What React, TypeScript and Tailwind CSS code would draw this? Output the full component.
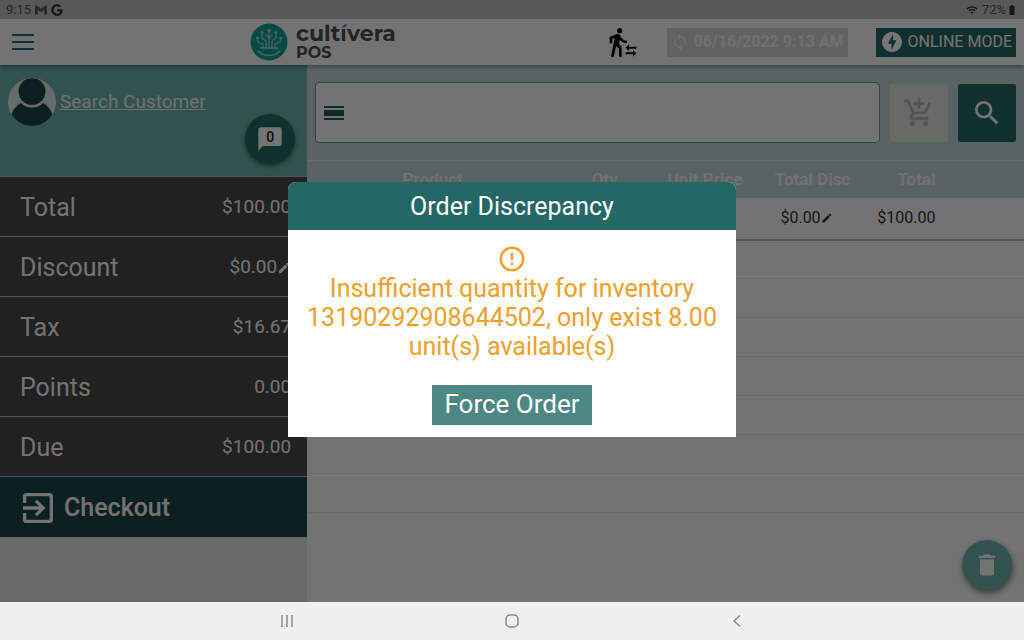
import {
  MdAddShoppingCart,
  MdBatteryFull,
  MdChatBubble,
  MdDelete,
  MdEdit,
  MdErrorOutline,
  MdExitToApp,
  MdOfflineBolt,
  MdSearch,
  MdSync,
  MdTransferWithinAStation,
  MdWifi,
} from "react-icons/md";
import { FaGoogle } from "react-icons/fa";
import { SiGmail } from "react-icons/si";

interface SummaryRow {
  label: string;
  value: string;
  editable?: boolean;
}

const SUMMARY: SummaryRow[] = [
  { label: "Total", value: "$100.00" },
  { label: "Discount", value: "$0.00", editable: true },
  { label: "Tax", value: "$16.67" },
  { label: "Points", value: "0.00" },
  { label: "Due", value: "$100.00" },
];

const EMPTY_ROWS = 7;

function MenuIcon() {
  return (
    <svg viewBox="0 0 22 16" className="h-4 w-[22px]" fill="#276b66">
      <rect y="0" width="22" height="2" />
      <rect y="7" width="22" height="2" />
      <rect y="14" width="22" height="2" />
    </svg>
  );
}

function BarsIcon() {
  return (
    <svg viewBox="0 0 20 14" className="h-[14px] w-5 shrink-0" fill="#1f5e59">
      <rect y="0" width="20" height="2" />
      <rect y="4" width="20" height="6" />
      <rect y="12" width="20" height="2" />
    </svg>
  );
}

function LogoMark() {
  return (
    <svg viewBox="0 0 38 38" className="size-[38px]">
      <circle cx="19" cy="19" r="18.5" fill="#0aa296" />
      <g fill="none" stroke="#9fd8d1" strokeWidth="1.3" strokeLinecap="round">
        <path d="M19 25V8" />
        <path d="M16 25v-7l-4-3V9" />
        <path d="M22 25v-7l4-3V9" />
        <path d="M13 25v-4l-5-2-1-4" />
        <path d="M25 25v-4l5-2 1-4" />
        <path d="M16 12l3 3 3-3" />
        <path d="M10 25h18" />
        <path d="M8 28c6 6 16 6 22 0" strokeWidth="1.6" />
      </g>
      <g fill="#9fd8d1">
        <circle cx="19" cy="7.5" r="1.7" />
        <circle cx="12" cy="9.5" r="1.5" />
        <circle cx="26" cy="9.5" r="1.5" />
        <circle cx="7.5" cy="15" r="1.5" />
        <circle cx="30.5" cy="15" r="1.5" />
      </g>
    </svg>
  );
}

function Avatar() {
  return (
    <svg viewBox="0 0 48 48" className="size-12 shrink-0">
      <defs>
        <clipPath id="avatar-clip">
          <circle cx="24" cy="24" r="24" />
        </clipPath>
      </defs>
      <g clipPath="url(#avatar-clip)">
        <rect width="48" height="48" fill="#e0eae4" />
        <path d="M3 38c2-7 6-11 10-13 5 6 17 6 22 0 4 2 8 6 10 13L36 48H12z" fill="#1c4750" />
        <circle cx="24" cy="13.5" r="13.5" fill="#1c4750" />
      </g>
    </svg>
  );
}

function StatusBar() {
  return (
    <div className="flex h-[19px] items-center justify-between bg-[#c0c0c0] px-[6px] text-[13px] text-[#555]">
      <div className="flex items-center gap-1">
        <span>9:15</span>
        <SiGmail className="size-3" />
        <FaGoogle className="size-3 text-[#333]" />
      </div>
      <div className="flex items-center">
        <MdWifi className="mr-1 size-3 text-[#333]" />
        <span>72%</span>
        <MdBatteryFull className="size-3 text-[#333]" />
      </div>
    </div>
  );
}

function Header() {
  return (
    <header className="relative z-10 flex h-[46px] items-center bg-[#fbfbfb] pr-2 pl-3 shadow-[0_2px_4px_rgba(0,0,0,0.35)]">
      <button type="button" aria-label="Menu">
        <MenuIcon />
      </button>
      <div className="ml-[216px] flex items-center gap-2 font-['Montserrat','Inter',sans-serif] font-bold text-[#4a4f52]">
        <LogoMark />
        <div>
          <div className="text-[22px] leading-[22px]">
            cult
            <span className="bg-linear-to-b from-[#0aa296] from-35% to-[#4a4f52] to-35% bg-clip-text text-transparent">
              í
            </span>
            vera
          </div>
          <div className="text-base leading-4">POS</div>
        </div>
      </div>
      <div className="ml-auto flex items-center gap-7">
        <button type="button" aria-label="Transfer" className="text-black">
          <MdTransferWithinAStation className="size-8" />
        </button>
        <button
          type="button"
          className="flex h-[29px] items-center gap-1 bg-[#d6d6d6] px-1 text-base font-bold text-[#f0f0f0]"
        >
          <MdSync className="size-[18px]" />
          06/16/2022 9:13 AM
        </button>
        <button
          type="button"
          className="flex h-[29px] items-center gap-1 bg-[#246865] px-1 text-base text-white"
        >
          <MdOfflineBolt className="size-6" />
          ONLINE MODE
        </button>
      </div>
    </header>
  );
}

function Sidebar() {
  return (
    <aside className="flex w-[30%] shrink-0 flex-col bg-[#e4e4e4]">
      <div className="relative flex h-[111px] items-start bg-[#6fb4ac] p-2 pt-[13px]">
        <a href="#customer" className="flex items-center gap-1 text-[19px] text-[#eef6f5] underline">
          <Avatar />
          Search Customer
        </a>
        <button
          type="button"
          aria-label="Messages"
          className="absolute right-3 bottom-3 grid size-[50px] place-items-center rounded-full bg-[#276b66] text-white shadow-[0_2px_5px_rgba(0,0,0,0.5)]"
        >
          <MdChatBubble className="col-start-1 row-start-1 size-7" />
          <span className="col-start-1 row-start-1 pb-1 text-sm font-medium text-[#222]">0</span>
        </button>
      </div>
      <dl className="bg-[#484848] text-[#fbfbfb]">
        {SUMMARY.map((row) => (
          <div
            key={row.label}
            className="flex h-15 items-center justify-between border-t border-[#b8b8b8] pt-[2px] pr-4 pl-5"
          >
            <dt className="text-[25px]">{row.label}</dt>
            <dd className="flex items-center text-[19px]">
              {row.value}
              {row.editable && <MdEdit className="size-[14px]" />}
            </dd>
          </div>
        ))}
      </dl>
      <button
        type="button"
        className="flex h-[61px] items-center gap-[6px] border-t border-[#b8b8b8] bg-[#1a4848] pt-[2px] pl-[18px] text-[25px] font-medium text-[#fbfbfb]"
      >
        <MdExitToApp className="size-10" />
        Checkout
      </button>
    </aside>
  );
}

function OrderArea() {
  return (
    <main className="relative min-w-0 flex-1 bg-[#fbfbfb]">
      <div className="flex h-[95px] items-center gap-[10px] bg-[#c4d7d7] px-2">
        <label className="flex h-[61px] min-w-0 flex-1 items-center gap-2 rounded-sm border border-[#7b8c8c] bg-[#fbfbfb] px-2">
          <BarsIcon />
          <input
            type="text"
            aria-label="Scan or search product"
            className="min-w-0 flex-1 text-xl outline-none"
          />
        </label>
        <button
          type="button"
          aria-label="Add to cart"
          className="grid size-[58px] place-items-center rounded-xs bg-[#e2e6dc] text-[#b6b8ac]"
        >
          <MdAddShoppingCart className="size-8" />
        </button>
        <button
          type="button"
          aria-label="Search"
          className="grid size-[58px] place-items-center rounded-xs bg-[#276b66] text-white"
        >
          <MdSearch className="size-8" />
        </button>
      </div>
      <table className="w-full table-fixed border-collapse">
        <colgroup>
          <col className="w-[35%]" />
          <col className="w-[13%]" />
          <col className="w-[15%]" />
          <col className="w-[15%]" />
          <col className="w-[13%]" />
          <col className="w-[9%]" />
        </colgroup>
        <thead>
          <tr className="h-[37px] border-t border-[#dfeaea] bg-[#c4d7d7] text-[17px] text-[#f4f4f4]">
            <th>Product</th>
            <th>Qty</th>
            <th>Unit Price</th>
            <th>Total Disc</th>
            <th className="pr-6 text-right">Total</th>
            <th />
          </tr>
        </thead>
        <tbody>
          <tr className="h-[42px] border-b-2 border-[#b5b5b5] text-base text-[#333]">
            <td />
            <td />
            <td />
            <td className="pr-3">
              <div className="flex items-center justify-center">
                $0.00
                <MdEdit className="size-3" />
              </div>
            </td>
            <td className="pr-6 text-right">$100.00</td>
            <td />
          </tr>
          {Array.from({ length: EMPTY_ROWS }, (_, i) => (
            <tr key={i} className="h-[39px] border-b border-[#e4e4e4]">
              <td colSpan={6} />
            </tr>
          ))}
        </tbody>
      </table>
      <button
        type="button"
        aria-label="Delete order"
        className="absolute right-3 bottom-3 grid size-[50px] place-items-center rounded-full bg-[#6fb4ac] text-[#fbfbfb] shadow-[1px_3px_6px_rgba(0,0,0,0.5)]"
      >
        <MdDelete className="size-7" />
      </button>
    </main>
  );
}

function DiscrepancyDialog() {
  return (
    <div className="absolute inset-0 z-20 flex items-center justify-center bg-black/54 pt-4">
      <div
        role="dialog"
        aria-modal="true"
        aria-labelledby="dialog-title"
        className="w-full max-w-[448px] overflow-hidden rounded-t-lg bg-white"
      >
        <h2
          id="dialog-title"
          className="flex h-12 items-center justify-center bg-[#246865] pt-[2px] text-[25px] text-white"
        >
          Order Discrepancy
        </h2>
        <div className="flex flex-col items-center px-4 pt-[14px] pb-3 text-center text-[25px] leading-[29px] text-[#eda02a]">
          <MdErrorOutline className="size-[30px]" />
          <p>
            Insufficient quantity for inventory 13190292908644502, only exist 8.00 unit(s) available(s)
          </p>
          <button type="button" className="mt-6 h-10 bg-[#4d8783] px-3 text-[26px] text-white">
            Force Order
          </button>
        </div>
      </div>
    </div>
  );
}

function SystemNav() {
  return (
    <nav className="flex h-[38px] items-center justify-around bg-[#f0f0f0] px-[17%] text-[#8a8a8a]">
      <button type="button" aria-label="Recent apps">
        <svg viewBox="0 0 14 14" className="size-[14px]" stroke="currentColor" strokeWidth="1.5">
          <path d="M2 1v12M7 1v12M12 1v12" />
        </svg>
      </button>
      <button type="button" aria-label="Home">
        <svg viewBox="0 0 14 14" className="size-[14px]" fill="none" stroke="currentColor" strokeWidth="1.5">
          <rect x="1" y="1" width="12" height="12" rx="4" />
        </svg>
      </button>
      <button type="button" aria-label="Back">
        <svg viewBox="0 0 14 14" className="size-[14px]" fill="none" stroke="currentColor" strokeWidth="1.5">
          <path d="M10 1.5L4 7l6 5.5" />
        </svg>
      </button>
    </nav>
  );
}

export default function App() {
  return (
    <div className="flex min-h-screen flex-col font-['Roboto',sans-serif]">
      <div className="relative flex flex-1 flex-col">
        <StatusBar />
        <Header />
        <div className="flex flex-1">
          <Sidebar />
          <OrderArea />
        </div>
        <DiscrepancyDialog />
      </div>
      <SystemNav />
    </div>
  );
}
